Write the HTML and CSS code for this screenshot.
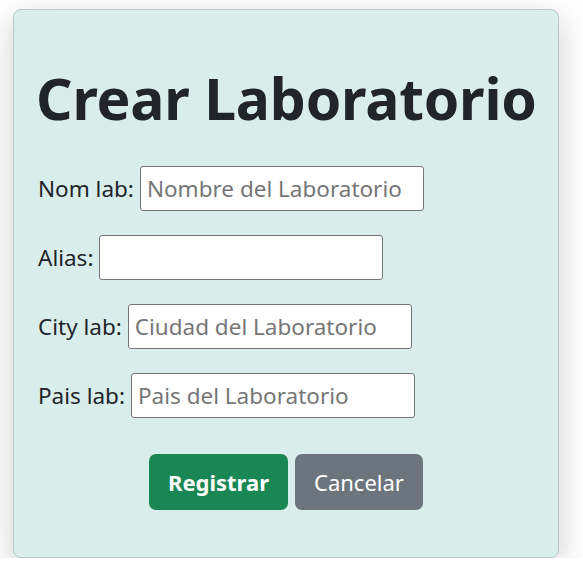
FILE: index.html
```html
<!DOCTYPE html>
<html lang="es">
<head>
<meta charset="utf-8">
<title>Crear Laboratorio</title>
<link rel="stylesheet" href="styles.css">
</head>
<body>
<main class="card">
  <h1 class="title">Crear Laboratorio</h1>
  <form class="form">
    <div class="row"><label for="nom">Nom lab:</label><input id="nom" type="text" placeholder="Nombre del Laboratorio"></div>
    <div class="row"><label for="alias">Alias:</label><input id="alias" type="text"></div>
    <div class="row"><label for="city">City lab:</label><input id="city" type="text" placeholder="Ciudad del Laboratorio"></div>
    <div class="row"><label for="pais">Pais lab:</label><input id="pais" type="text" placeholder="Pais del Laboratorio"></div>
    <div class="actions">
      <button type="submit" class="btn btn-success">Registrar</button>
      <button type="button" class="btn btn-secondary">Cancelar</button>
    </div>
  </form>
</main>
</body>
</html>
```
FILE: styles.css
```css
html, body { margin: 0; padding: 0; }
body {
  background: #ffffff;
  font-family: "Noto Sans", "Open Sans", sans-serif;
  color: #212529;
  padding: 9px 0 0 13px;
}
.card {
  box-sizing: border-box;
  width: 546px;
  height: 549px;
  background: #d9eeeb;
  border: 1px solid #b4cac7;
  border-radius: 8px;
  box-shadow: 0 10px 32px rgba(0,0,0,0.2);
  padding: 0 22px;
}
.title {
  margin: 60px 0 0 0;
  font-size: 57px;
  font-weight: 700;
  line-height: 1;
  letter-spacing: -0.2px;
  white-space: nowrap;
  text-align: center;
}
.form {
  display: flex;
  flex-direction: column;
  gap: 24px;
  margin-top: 39px;
}
.row {
  display: flex;
  align-items: center;
  gap: 6px;
  font-size: 22.5px;
  padding-left: 2px;
}
.row label { white-space: nowrap; }
.row input {
  box-sizing: border-box;
  width: 284px;
  height: 45px;
  border: 1px solid #767676;
  border-radius: 3px;
  background: #fff;
  padding: 0 6px;
  font-family: inherit;
  font-size: 22.5px;
  color: #212529;
}
.row input::placeholder { color: #767676; }
.actions {
  display: flex;
  justify-content: center;
  gap: 7px;
  margin-top: 12px;
}
.btn {
  height: 56px;
  border: none;
  border-radius: 7px;
  color: #fff;
  font-family: inherit;
  font-size: 22px;
  padding: 0;
}
.btn-success { background: #198754; font-weight: 700; width: 139px; }
.btn-secondary { background: #6c757d; width: 128px; }
```
